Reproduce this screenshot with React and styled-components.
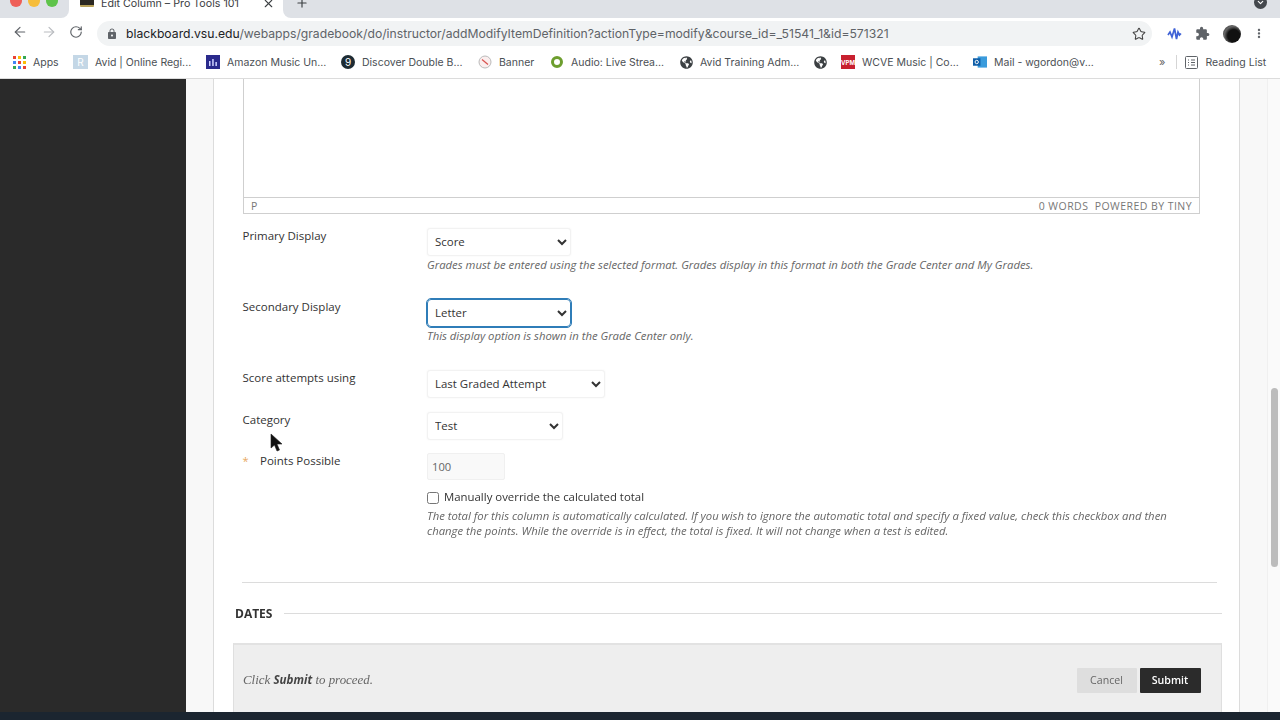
import React from "react";
import styled, { createGlobalStyle } from "styled-components";
import { ArrowLeft, ArrowRight, RotateCw, Star, Plus, X, ChevronDown } from "lucide-react";
import { MdLock, MdExtension, MdMoreVert } from "react-icons/md";
import { FaGlobeAmericas } from "react-icons/fa";

const Global = createGlobalStyle`
  html, body { margin: 0; padding: 0; background: #fff; }
  body { font-family: "Open Sans", "Liberation Sans", sans-serif; }
  * { box-sizing: border-box; }
`;

const Page = styled.div`
  position: relative;
  width: 1280px;
  height: 720px;
  overflow: hidden;
  display: flex;
  flex-direction: column;
  filter: blur(0.35px);
`;

/* Browser chrome */
const Chrome = styled.header`
  flex: none;
  height: 79px;
  background: #fff;
  border-bottom: 1px solid #dcdcdc;
  font-family: "Inter", "Liberation Sans", sans-serif;
  display: flex;
  flex-direction: column;
`;
const TabStrip = styled.div`
  flex: none;
  height: 18px;
  display: flex;
  overflow: hidden;
`;
const StripLeft = styled.div`
  flex: none;
  width: 69px;
  background: #dee1e6;
  border-bottom-right-radius: 8px;
  display: flex;
  gap: 6px;
  padding-left: 10px;
`;
const Light = styled.span`
  flex: none;
  width: 12px;
  height: 12px;
  margin-top: -5px;
  border-radius: 50%;
  background: ${(p) => p.$c};
`;
const Tab = styled.div`
  flex: none;
  width: 214px;
  display: flex;
  align-items: flex-start;
  padding-left: 11px;
  background: #fff;
`;
const TabIcon = styled.span`
  flex: none;
  width: 14px;
  height: 9px;
  margin-top: -2px;
  background: #2b2822;
  border-radius: 1px;
  border-bottom: 2px solid #b8a25a;
`;
const TabTitle = styled.span`
  flex: none;
  width: 161px;
  margin: -3px 0 0 7px;
  font-size: 10.7px;
  line-height: 14px;
  color: #3c4043;
  white-space: nowrap;
`;
const TabClose = styled.span`
  margin-top: -3px;
  color: #3c4043;
  display: flex;
`;
const StripRight = styled.div`
  flex: 1;
  background: #dee1e6;
  border-bottom-left-radius: 8px;
  display: flex;
  justify-content: space-between;
  padding: 0 13px 0 12px;
  color: #3c4043;
`;
const NewTab = styled.span`
  margin-top: -4px;
  display: flex;
`;
const ProfileDot = styled.span`
  width: 13px;
  height: 13px;
  margin-top: -4px;
  border-radius: 50%;
  background: #44484d;
  color: #fff;
  display: flex;
  align-items: center;
  justify-content: center;
`;
const Toolbar = styled.div`
  flex: none;
  height: 28px;
  display: flex;
  align-items: center;
  padding-left: 12px;
`;
const NavButton = styled.span`
  flex: none;
  width: ${(p) => p.$w}px;
  display: flex;
  color: ${(p) => p.$c || "#5f6368"};
`;
const Omnibox = styled.div`
  flex: none;
  width: 1055px;
  height: 25px;
  margin: 3px 0 0 4px;
  padding: 0 6px 0 9px;
  border-radius: 13px;
  background: #f1f3f4;
  display: flex;
  align-items: center;
  color: #5f6368;
`;
const Url = styled.div`
  flex: 1;
  margin-left: 8px;
  font-size: 12.2px;
  color: #5f6368;
  white-space: nowrap;
  b { font-weight: 400; color: #202124; }
`;
const Actions = styled.div`
  flex: none;
  display: flex;
  align-items: center;
  margin-left: 15px;
  margin-top: 3px;
  color: #5f6368;
`;
const ActionSlot = styled.span`
  flex: none;
  width: ${(p) => p.$w}px;
  display: flex;
`;
const Avatar = styled.span`
  width: 18px;
  height: 18px;
  border-radius: 50%;
  background: radial-gradient(circle at 60% 60%, #111 0 40%, #666 62%, #222 100%);
`;
const Bookmarks = styled.nav`
  flex: 1;
  display: flex;
  align-items: center;
  padding: 0 0 0 13px;
  font-size: 10.5px;
  color: #4b4f54;
`;
const Bookmark = styled.div`
  flex: none;
  width: ${(p) => p.$w}px;
  display: flex;
  align-items: center;
  gap: 7px;
  white-space: nowrap;
  overflow: hidden;
`;
const IconBox = styled.span`
  flex: none;
  width: ${(p) => p.$s || 14}px;
  height: 14px;
  display: flex;
  align-items: center;
  justify-content: center;
  font-size: 10px;
  color: #fff;
  background: ${(p) => p.$bg || "transparent"};
  border-radius: ${(p) => (p.$round ? "50%" : "0")};
`;
const TinyMark = styled.span`
  font-size: 6px;
  font-weight: 700;
`;
const AppsGrid = styled.span`
  flex: none;
  width: 13px;
  height: 13px;
  display: grid;
  grid-template-columns: repeat(3, 3px);
  gap: 2px;
`;
const AppsDot = styled.i`
  background: ${(p) => p.$c};
`;
const Separator = styled.span`
  flex: none;
  width: 1px;
  height: 14px;
  margin: 0 8px 0 11px;
  background: #d5d5d5;
`;
const Chevrons = styled.span`
  flex: none;
  margin-left: 0;
  font-size: 11px;
  color: #666;
`;

/* Page */
const Viewport = styled.div`
  flex: 1;
  min-height: 0;
  display: flex;
  overflow: hidden;
`;
const Sidebar = styled.aside`
  flex: none;
  width: 186px;
  background: #2a2a2a;
`;
const Gutter = styled.div`
  flex: none;
  width: 27px;
  background: #f8f8f8;
`;
const Content = styled.main`
  flex: none;
  width: 1027px;
  padding-left: 19px;
  background: #fff;
  border-left: 1px solid #dcdcdc;
  border-right: 1px solid #dcdcdc;
  display: flex;
  flex-direction: column;
`;
const FormArea = styled.div`
  margin-left: 9px;
  width: 975px;
  flex: none;
`;
const Editor = styled.div`
  width: 957px;
  height: 135px;
  margin-left: 1px;
  border: 1px solid #cfcfcf;
  border-top: 0;
  display: flex;
  flex-direction: column;
  justify-content: flex-end;
`;
const EditorStatus = styled.div`
  height: 16px;
  border-top: 1px solid #cfcfcf;
  padding: 0 7px;
  display: flex;
  justify-content: space-between;
  align-items: center;
  font-size: 10.5px;
  letter-spacing: 0.45px;
  color: #777;
`;
const Row = styled.div`
  display: flex;
  align-items: flex-start;
  margin-top: ${(p) => p.$mt}px;
`;
const Label = styled.div`
  flex: none;
  width: 185px;
  padding: ${(p) => (p.$tight ? "0 0 0 0.5px" : "1px 0 0 0.5px")};
  font-size: 11.5px;
  line-height: 18px;
  color: #333;
  display: flex;
`;
const Required = styled.span`
  flex: none;
  width: 17.5px;
  color: #e8a860;
  font-size: 11px;
`;
const Field = styled.div`
  flex: 1;
  min-width: 0;
  padding-top: ${(p) => p.$pt}px;
`;
const Select = styled.select`
  display: block;
  width: ${(p) => p.$w}px;
  height: 28px;
  padding: 0 1px 2px 3px;
  font: 400 11.45px "Open Sans", sans-serif;
  color: #333;
  background: #fff;
  border: 1px solid #f2f2f2;
  border-radius: 3px;
  box-shadow: 0 0 2px rgba(0, 0, 0, 0.05);
  ${(p) => p.$focus && "outline: 1.5px solid #2f7db8; border-color: #2f7db8; border-radius: 4px;"}
`;
const Hint = styled.p`
  margin: ${(p) => p.$mt || 1}px 0 0;
  font-size: 11.32px;
  line-height: 15px;
  font-style: italic;
  color: #666;
  white-space: nowrap;
`;
const NumberInput = styled.input`
  display: block;
  width: 78px;
  height: 27px;
  padding: 0 4px;
  font: 400 11.2px "Open Sans", sans-serif;
  color: #666;
  background: #f9f9f9;
  border: 1px solid #f0f0f0;
  border-radius: 2px;
`;
const CheckRow = styled.label`
  margin-top: 8px;
  display: flex;
  align-items: center;
  gap: 5px;
  font-size: 11.4px;
  line-height: 18px;
  color: #333;
`;
const Check = styled.input`
  flex: none;
  width: 12px;
  height: 12px;
  margin: 1px 0 0;
`;
const Divider = styled.hr`
  margin: 44px 0 0;
  height: 1px;
  border: 0;
  background: #dcdcdc;
`;
const SectionHead = styled.div`
  flex: none;
  width: 987px;
  margin: 22px 0 0 2px;
  display: flex;
  align-items: center;
  gap: 12px;
`;
const SectionTitle = styled.h2`
  margin: 0;
  font-size: 12px;
  line-height: 18px;
  font-weight: 700;
  color: #333;
`;
const SectionLine = styled.span`
  flex: 1;
  height: 1px;
  margin-bottom: 2px;
  background: #dcdcdc;
`;
const SubmitBar = styled.div`
  flex: 1;
  width: 989px;
  margin-top: 20px;
  padding: 3px 20.5px 0 9px;
  display: flex;
  align-items: center;
  justify-content: space-between;
  background: #eeeeee;
  border: 1px solid #dfdfdf;
  border-bottom: 0;
  border-top: 2px solid #e2e2e2;
`;
const SubmitNote = styled.div`
  margin-top: -1px;
  font: italic 400 12.9px "Liberation Serif", serif;
  color: #666;
  b { font: italic 700 11.6px "Open Sans", sans-serif; color: #444; }
`;
const ButtonGroup = styled.div`
  display: flex;
  gap: 3px;
`;
const Button = styled.button`
  width: ${(p) => p.$w}px;
  height: 25px;
  border: 0;
  border-radius: 1px;
  font: ${(p) => (p.$primary ? 600 : 400)} 10.6px "Open Sans", sans-serif;
  color: ${(p) => (p.$primary ? "#fff" : "#666")};
  background: ${(p) => (p.$primary ? "#2b2b2b" : "#dedede")};
`;
const RightGutter = styled.div`
  flex: none;
  width: 27px;
  background: #f8f8f8;
`;
const ScrollTrack = styled.div`
  flex: none;
  width: 13px;
  padding: 309px 0 0 3px;
  background: #fafafa;
  border-left: 1px solid #f0f0f0;
`;
const ScrollThumb = styled.div`
  width: 7px;
  height: 179px;
  border-radius: 4px;
  background: #bcbcbc;
`;
const BottomBar = styled.div`
  flex: none;
  height: 8px;
  background: #1b2530;
`;
const Cursor = styled.svg`
  position: absolute;
  left: 270px;
  top: 433px;
`;

const appsColors = ["#ea4335", "#fbbc05", "#34a853", "#4285f4", "#ea4335", "#fbbc05", "#34a853", "#4285f4", "#ea4335"];

const Globe = () => <FaGlobeAmericas size={13} color="#3c4043" />;

export default function App() {
  return (
    <Page>
      <Global />
      <Chrome>
        <TabStrip>
          <StripLeft>
            <Light $c="#ee5f58" />
            <Light $c="#f6bd3b" />
            <Light $c="#5ec34a" />
          </StripLeft>
          <Tab>
            <TabIcon />
            <TabTitle>Edit Column – Pro Tools 101</TabTitle>
            <TabClose><X size={13} strokeWidth={2} /></TabClose>
          </Tab>
          <StripRight>
            <NewTab><Plus size={14} strokeWidth={2} /></NewTab>
            <ProfileDot><ChevronDown size={9} strokeWidth={3} /></ProfileDot>
          </StripRight>
        </TabStrip>
        <Toolbar>
          <NavButton $w={29}><ArrowLeft size={16} strokeWidth={1.8} /></NavButton>
          <NavButton $w={28} $c="#b9bcc0"><ArrowRight size={16} strokeWidth={1.8} /></NavButton>
          <NavButton $w={24}><RotateCw size={14} strokeWidth={2} /></NavButton>
          <Omnibox>
            <MdLock size={12} />
            <Url><b>blackboard.vsu.edu</b>/webapps/gradebook/do/instructor/addModifyItemDefinition?actionType=modify&amp;course_id=_51541_1&amp;id=571321</Url>
            <Star size={14} strokeWidth={1.8} color="#444" />
          </Omnibox>
          <Actions>
            <ActionSlot $w={28}>
              <svg width="15" height="14" viewBox="0 0 15 14">
                <path d="M1 8 L3 5 L5 10 L7.5 1.5 L9.5 12 L11 5 L12.5 8 L14 6.5" fill="none" stroke="#3f62d6" strokeWidth="1.7" />
              </svg>
            </ActionSlot>
            <ActionSlot $w={28}><MdExtension size={15} /></ActionSlot>
            <ActionSlot $w={29}><Avatar /></ActionSlot>
            <ActionSlot $w={14}><MdMoreVert size={15} /></ActionSlot>
          </Actions>
        </Toolbar>
        <Bookmarks>
          <Bookmark $w={60}>
            <AppsGrid>{appsColors.map((c, i) => <AppsDot key={i} $c={c} />)}</AppsGrid>
            Apps
          </Bookmark>
          <Bookmark $w={133}>
            <IconBox $bg="#c4d7e6" $s={15}>R</IconBox>
            Avid | Online Regi...
          </Bookmark>
          <Bookmark $w={135}>
            <IconBox $bg="#2a2a8c">
              <svg width="10" height="8" viewBox="0 0 10 8"><path d="M1 8V3h1.5v5zM4.2 8V1h1.5v7zM7.4 8V4h1.5v4z" fill="#cfd3ff" /></svg>
            </IconBox>
            Amazon Music Un...
          </Bookmark>
          <Bookmark $w={137}>
            <IconBox $bg="#1d2b33" $round>9</IconBox>
            Discover Double B...
          </Bookmark>
          <Bookmark $w={72}>
            <IconBox>
              <svg width="14" height="14" viewBox="0 0 14 14"><circle cx="7" cy="7" r="6" fill="#fbeeee" stroke="#bbb" /><path d="M4 4.5L10 9.5" stroke="#d9534f" strokeWidth="1.2" /></svg>
            </IconBox>
            Banner
          </Bookmark>
          <Bookmark $w={129}>
            <IconBox>
              <svg width="14" height="14" viewBox="0 0 14 14"><circle cx="7" cy="7" r="4.5" fill="none" stroke="#6d9e2e" strokeWidth="3" /></svg>
            </IconBox>
            Audio: Live Strea...
          </Bookmark>
          <Bookmark $w={134}>
            <IconBox><Globe /></IconBox>
            Avid Training Adm...
          </Bookmark>
          <Bookmark $w={28}>
            <IconBox><Globe /></IconBox>
          </Bookmark>
          <Bookmark $w={132}>
            <IconBox $bg="#c8202f"><TinyMark>VPM</TinyMark></IconBox>
            WCVE Music | Co...
          </Bookmark>
          <Bookmark $w={186}>
            <IconBox>
              <svg width="15" height="14" viewBox="0 0 15 14"><rect x="5" y="1" width="10" height="12" fill="#3a9bdc" /><rect x="0" y="3" width="8" height="8" fill="#0f5ea8" /><circle cx="4" cy="7" r="1.8" fill="none" stroke="#fff" /></svg>
            </IconBox>
            Mail - wgordon@v...
          </Bookmark>
          <Chevrons>»</Chevrons>
          <Separator />
          <Bookmark $w={82}>
            <svg width="13" height="13" viewBox="0 0 13 13" fill="none" stroke="#5f6368" strokeWidth="1"><rect x="0.5" y="0.5" width="12" height="12" rx="1" /><path d="M3 4h1M6 4h4M3 6.5h1M6 6.5h4M3 9h1M6 9h4" /></svg>
            Reading List
          </Bookmark>
        </Bookmarks>
      </Chrome>

      <Viewport>
        <Sidebar />
        <Gutter />
        <Content>
          <FormArea>
            <Editor>
              <EditorStatus>
                <span>P</span>
                <span>0 WORDS&nbsp;&nbsp;POWERED BY TINY</span>
              </EditorStatus>
            </Editor>
            <Row $mt={12}>
              <Label>Primary Display</Label>
              <Field $pt={2}>
                <Select $w={144} defaultValue="Score"><option>Score</option></Select>
                <Hint>Grades must be entered using the selected format. Grades display in this format in both the Grade Center and My Grades.</Hint>
              </Field>
            </Row>
            <Row $mt={25}>
              <Label>Secondary Display</Label>
              <Field $pt={2}>
                <Select $w={144} $focus defaultValue="Letter"><option>Letter</option></Select>
                <Hint>This display option is shown in the Grade Center only.</Hint>
              </Field>
            </Row>
            <Row $mt={25}>
              <Label>Score attempts using</Label>
              <Field $pt={2}>
                <Select $w={178} defaultValue="Last Graded Attempt"><option>Last Graded Attempt</option></Select>
              </Field>
            </Row>
            <Row $mt={12}>
              <Label>Category</Label>
              <Field $pt={2}>
                <Select $w={136} defaultValue="Test"><option>Test</option></Select>
              </Field>
            </Row>
            <Row $mt={12}>
              <Label $tight><Required>*</Required>Points Possible</Label>
              <Field $pt={1}>
                <NumberInput readOnly value="100" />
                <CheckRow><Check type="checkbox" readOnly />Manually override the calculated total</CheckRow>
                <Hint $mt={2}>
                  The total for this column is automatically calculated. If you wish to ignore the automatic total and specify a fixed value, check this checkbox and then<br />
                  change the points. While the override is in effect, the total is fixed. It will not change when a test is edited.
                </Hint>
              </Field>
            </Row>
            <Divider />
          </FormArea>
          <SectionHead>
            <SectionTitle>DATES</SectionTitle>
            <SectionLine />
          </SectionHead>
          <SubmitBar>
            <SubmitNote>Click <b>Submit</b> to proceed.</SubmitNote>
            <ButtonGroup>
              <Button $w={60}>Cancel</Button>
              <Button $w={61} $primary>Submit</Button>
            </ButtonGroup>
          </SubmitBar>
        </Content>
        <RightGutter />
        <ScrollTrack><ScrollThumb /></ScrollTrack>
      </Viewport>
      <BottomBar />
      <Cursor width="14" height="20" viewBox="0 0 14 20">
        <path d="M1 1 L1 15 L4.5 12 L7 18 L9.5 17 L7 11 L12 11 Z" fill="#111" stroke="#222" strokeWidth="0.6" />
      </Cursor>
    </Page>
  );
}
